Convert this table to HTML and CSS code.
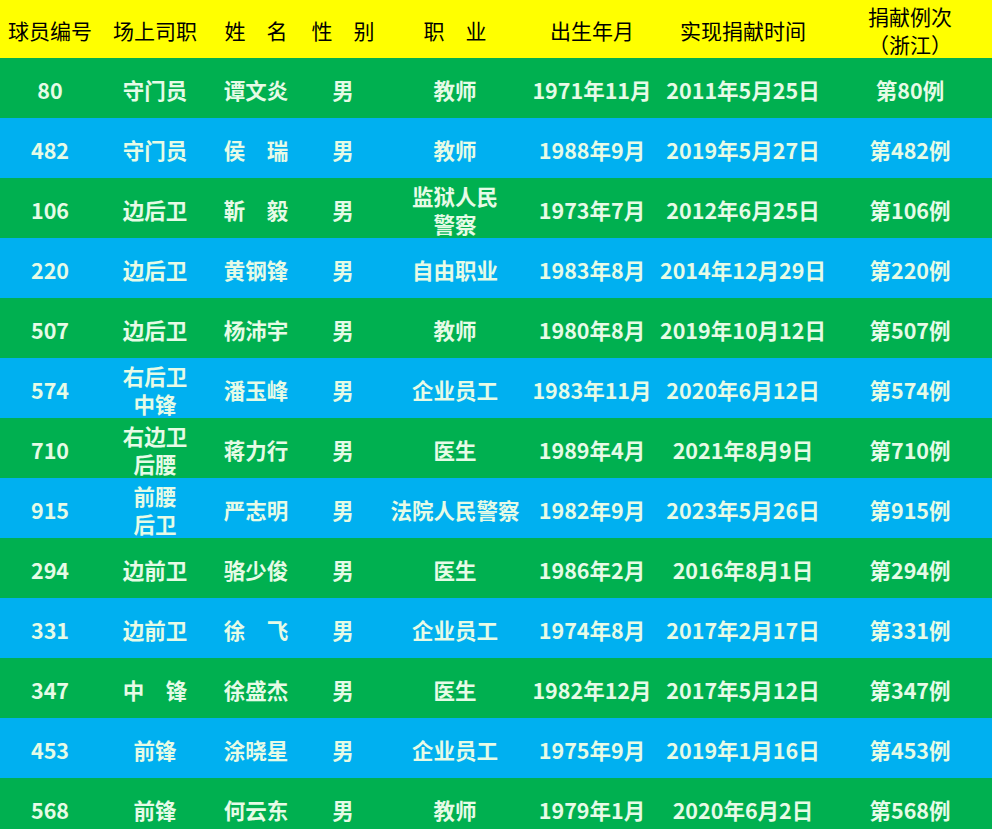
FILE: index.html
```html
<!DOCTYPE html>
<html lang="zh-CN">
<head>
<meta charset="utf-8">
<title>球员名单</title>
<link rel="stylesheet" href="styles.css">
</head>
<body>
<table class="roster">
  <colgroup>
    <col class="c1"><col class="c2"><col class="c3"><col class="c4">
    <col class="c5"><col class="c6"><col class="c7"><col class="c8">
  </colgroup>
  <thead>
    <tr>
      <th>球员编号</th><th>场上司职</th><th>姓　名</th><th>性　别</th>
      <th>职　业</th><th>出生年月</th><th>实现捐献时间</th><th>捐献例次<br>（浙江）</th>
    </tr>
  </thead>
  <tbody>
    <tr class="g"><td>80</td><td>守门员</td><td>谭文炎</td><td>男</td><td>教师</td><td>1971年11月</td><td>2011年5月25日</td><td>第80例</td></tr>
    <tr class="b"><td>482</td><td>守门员</td><td>侯　瑞</td><td>男</td><td>教师</td><td>1988年9月</td><td>2019年5月27日</td><td>第482例</td></tr>
    <tr class="g"><td>106</td><td>边后卫</td><td>靳　毅</td><td>男</td><td>监狱人民<br>警察</td><td>1973年7月</td><td>2012年6月25日</td><td>第106例</td></tr>
    <tr class="b"><td>220</td><td>边后卫</td><td>黄钢锋</td><td>男</td><td>自由职业</td><td>1983年8月</td><td>2014年12月29日</td><td>第220例</td></tr>
    <tr class="g"><td>507</td><td>边后卫</td><td>杨沛宇</td><td>男</td><td>教师</td><td>1980年8月</td><td>2019年10月12日</td><td>第507例</td></tr>
    <tr class="b"><td>574</td><td>右后卫<br>中锋</td><td>潘玉峰</td><td>男</td><td>企业员工</td><td>1983年11月</td><td>2020年6月12日</td><td>第574例</td></tr>
    <tr class="g"><td>710</td><td>右边卫<br>后腰</td><td>蒋力行</td><td>男</td><td>医生</td><td>1989年4月</td><td>2021年8月9日</td><td>第710例</td></tr>
    <tr class="b"><td>915</td><td>前腰<br>后卫</td><td>严志明</td><td>男</td><td>法院人民警察</td><td>1982年9月</td><td>2023年5月26日</td><td>第915例</td></tr>
    <tr class="g"><td>294</td><td>边前卫</td><td>骆少俊</td><td>男</td><td>医生</td><td>1986年2月</td><td>2016年8月1日</td><td>第294例</td></tr>
    <tr class="b"><td>331</td><td>边前卫</td><td>徐　飞</td><td>男</td><td>企业员工</td><td>1974年8月</td><td>2017年2月17日</td><td>第331例</td></tr>
    <tr class="g"><td>347</td><td>中　锋</td><td>徐盛杰</td><td>男</td><td>医生</td><td>1982年12月</td><td>2017年5月12日</td><td>第347例</td></tr>
    <tr class="b"><td>453</td><td>前锋</td><td>涂晓星</td><td>男</td><td>企业员工</td><td>1975年9月</td><td>2019年1月16日</td><td>第453例</td></tr>
    <tr class="g"><td>568</td><td>前锋</td><td>何云东</td><td>男</td><td>教师</td><td>1979年1月</td><td>2020年6月2日</td><td>第568例</td></tr>
  </tbody>
</table>
</body>
</html>
```

FILE: styles.css
```css
html, body {
  margin: 0;
  padding: 0;
  background: #ffffff;
  overflow: hidden;
}

.roster {
  width: 992px;
  border-collapse: collapse;
  table-layout: fixed;
  font-family: "Noto Sans CJK SC", "Noto Sans", sans-serif;
}

.c1 { width: 100px; }
.c2 { width: 110px; }
.c3 { width: 92px; }
.c4 { width: 82px; }
.c5 { width: 142px; }
.c6 { width: 132px; }
.c7 { width: 170px; }
.c8 { width: 164px; }

.roster th,
.roster td {
  text-align: center;
  vertical-align: middle;
  white-space: nowrap;
  overflow: hidden;
}

.roster thead tr {
  height: 58px;
  background: #ffff00;
}

.roster th {
  padding: 2px 0 0 0;
  font-size: 21px;
  font-weight: normal;
  color: #000000;
  line-height: 28px;
}

.roster tbody tr {
  height: 60px;
}

.roster tr.g { background: #00b050; }
.roster tr.b { background: #00b0f0; }

.roster td {
  padding: 3px 0 0 0;
  font-size: 21.5px;
  font-weight: bold;
  color: #e6fbe6;
  line-height: 28px;
}
```
